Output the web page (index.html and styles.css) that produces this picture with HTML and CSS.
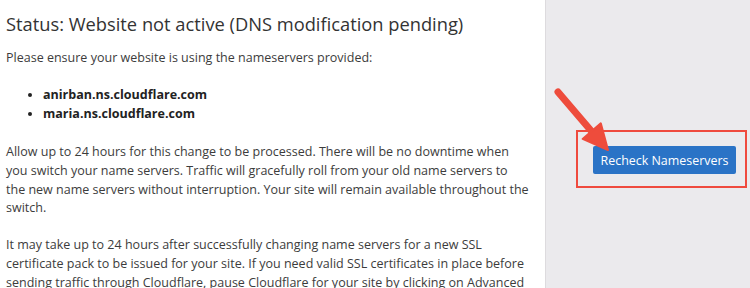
FILE: index.html
```html
<!DOCTYPE html>
<html lang="en">
<head>
    <meta charset="UTF-8">
    <meta name="viewport" content="width=device-width, initial-scale=1.0">
    <title>Status: Website not active</title>
    <link rel="stylesheet" href="styles.css">
</head>
<body>
    <div class="page">
        <div class="main">
            <h1>Status: Website not active (DNS modification pending)</h1>
            <p>Please ensure your website is using the nameservers provided:</p>
            <ul class="ns-list">
                <li>anirban.ns.cloudflare.com</li>
                <li>maria.ns.cloudflare.com</li>
            </ul>
            <p>Allow up to 24 hours for this change to be processed. There will be no downtime when you switch your name servers. Traffic will gracefully roll from your old name servers to the new name servers without interruption. Your site will remain available throughout the switch.</p>
            <p>It may take up to 24 hours after successfully changing name servers for a new SSL certificate pack to be issued for your site. If you need valid SSL certificates in place before sending traffic through Cloudflare, pause Cloudflare for your site by clicking on Advanced Actions below.</p>
        </div>
        <div class="side">
            <svg class="arrow" width="204" height="288" viewBox="0 0 204 288">
                <line x1="12" y1="92" x2="47" y2="133" stroke="#ee4c3c" stroke-width="7" stroke-linecap="round"/>
                <polygon points="62,150 36.6,138.9 54.8,123.3" fill="#ee4c3c" stroke="#ee4c3c" stroke-width="2" stroke-linejoin="round"/>
            </svg>
            <div class="highlight">
                <button class="btn">Recheck Nameservers</button>
            </div>
        </div>
    </div>
</body>
</html>
```

FILE: styles.css
```css
body {
    margin: 0;
    font-family: "Open Sans", Arial, sans-serif;
    font-size: 12.53px;
    line-height: 18.6px;
    color: #3c3c3c;
    background: #fff;
}
.page {
    display: flex;
    min-height: 100vh;
}
.main {
    width: 523px;
    padding: 13px 16px 0 6px;
    border-right: 1px solid #dddbde;
}
h1 {
    font-size: 18.3px;
    font-weight: normal;
    line-height: 22px;
    color: #333;
    margin: 0 0 14px;
}
p {
    margin: 0 0 18.6px;
}
.ns-list {
    margin: 0 0 20px;
    padding-left: 37px;
    font-weight: bold;
    color: #222;
}
.side {
    flex: 1;
    position: relative;
    background: #ebeaed;
    padding: 130px 0 0 30px;
}
.arrow {
    position: absolute;
    top: 0;
    left: 0;
    z-index: 2;
}
.highlight {
    width: 146px;
    height: 28px;
    padding: 14px 6px 12px 15px;
    border: 2px solid #ef4a3e;
}
.btn {
    display: block;
    width: 143px;
    height: 28px;
    padding: 0;
    border: none;
    border-radius: 2px;
    background: #2a73c6;
    color: #fff;
    font-family: "Open Sans", Arial, sans-serif;
    font-size: 12.45px;
    white-space: nowrap;
}
```
